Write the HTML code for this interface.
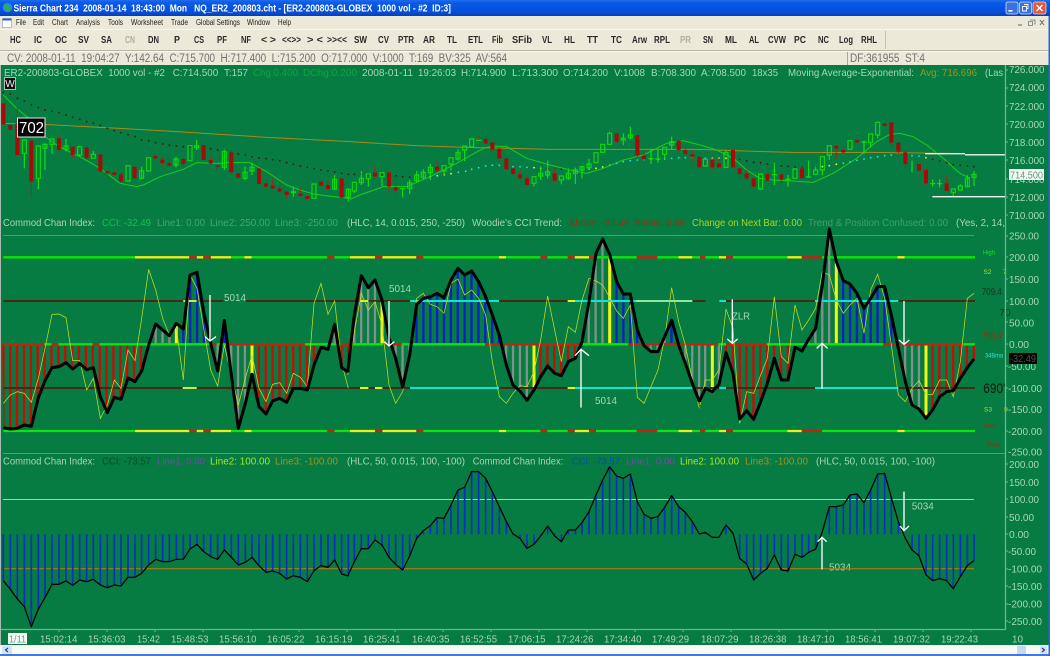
<!DOCTYPE html>
<html><head><meta charset="utf-8"><title>Sierra Chart</title>
<style>
html,body{margin:0;padding:0;background:#067b42;overflow:hidden}
svg{display:block;filter:blur(.3px)}
text{font-family:"Liberation Sans",sans-serif;white-space:pre}
.tb text{font-size:10px;font-weight:bold;fill:#2a2a2a}
.mn text{font-size:8.5px;fill:#222}
.lg text{font-size:10.5px;fill:#a8d6ba}
.ax text{font-size:10.5px;fill:#a8d6ba}
.tm text{font-size:10.5px;fill:#a8d6ba}
.an text{font-size:10.5px;fill:#a8d6ba}
.rl text{font-size:6.5px}
.n{fill:none}
.rw{fill:none;stroke:#a02a12;stroke-width:3}
.rb{fill:none;stroke:#a80a0a;stroke-width:12}
.gw{fill:none;stroke:#12e012;stroke-width:3.5}
.gb{fill:none;stroke:#10d810;stroke-width:3.5}
.dd{fill:none;stroke:#4a140c;stroke-width:5.5;stroke-linecap:round}
.dy{fill:none;stroke:#f4f430;stroke-width:5.5;stroke-linecap:round}
.dc{fill:none;stroke:#18e8d4;stroke-width:5.5;stroke-linecap:round}
.ma{fill:none;stroke:#18d018;stroke-width:3}
.ob{fill:none;stroke:#a88a20;stroke-width:3}
.k{fill:none;stroke:#000;stroke-width:9;stroke-linejoin:round}
.y{fill:none;stroke:#c4de28;stroke-width:2.2}
.h{fill:none;stroke-width:800;stroke-dasharray:7 13.64}
.hr{stroke:#c80c08}.hg{stroke:#80908a}.hb{stroke:#0a22c8}
.hy{fill:none;stroke:#f4f410;stroke-width:9}
.g{fill:none;stroke:#0ae60a;stroke-width:7}
.yl{fill:none;stroke:#eeee14;stroke-width:7}
.r{fill:none;stroke:#c8200e;stroke-width:7}
.b{fill:none;stroke:#4a2812;stroke-width:6}
.c{fill:none;stroke:#10e2d6;stroke-width:6}
.w{fill:none;stroke:#fff;stroke-width:4}
.k2{fill:none;stroke:#000;stroke-width:3.8;stroke-linejoin:round}
.bl{fill:none;stroke:#0630c4;stroke-width:5}
</style></head>
<body>
<svg width="1050" height="656" viewBox="0 0 1050 656" xmlns="http://www.w3.org/2000/svg">
<defs>
<linearGradient id="tg" x1="0" y1="0" x2="0" y2="1"><stop offset="0" stop-color="#1f6cec"/><stop offset=".2" stop-color="#0a58e6"/><stop offset=".75" stop-color="#0450dc"/><stop offset="1" stop-color="#0a3cb4"/></linearGradient>
<clipPath id="c6"><polygon points="6,388 10,638 31,642 52,640 73,630 94,634 115,548 135,497 156,458 177,455 198,443 218,462 239,445 260,464 280,458 301,545 322,593 343,547 363,553 384,489 405,500 425,468 446,390 467,327 488,345 508,362 529,325 550,342 570,180 591,172 611,290 632,385 653,468 673,316 694,480 715,640 736,565 756,478 777,575 798,597 818,558 839,550 860,562 880,520 901,520 922,525 942,450 963,397 984,403 1004,328 1025,458 1045,472 1050,472 1050,388"/></clipPath>
<clipPath id="c7"><polygon points="-7,388 -7,472 13,300 34,182 55,218 75,195 96,255 117,370 137,430 158,516 179,420 200,268 220,250 241,245 261,235 282,248 303,195 324,160 344,180 365,168 386,200 407,245 427,300 448,360 469,450 489,510 510,528 531,556 552,525 572,485 593,453 614,475 634,482 655,440 676,430 696,380 717,260 738,115 758,72 779,118 800,200 820,237 841,237 862,345 882,392 903,410 924,410 944,365 965,315 986,390 1006,445 1027,505 1048,560 1052,560 1052,388"/></clipPath>
<clipPath id="c8"><polygon points="-2,388 -2,560 16,520 37,530 57,508 78,413 99,475 119,612 140,587 161,613 182,560 202,505 223,430 244,495 264,495 285,397 306,408 326,373 347,340 367,210 388,42 409,140 430,197 450,207 471,235 492,280 512,250 533,215 554,215 574,300 595,400 616,500 636,570 657,582 678,610 698,585 719,545 740,530 760,527 781,490 802,458 822,432 826,432 826,388"/></clipPath>
<clipPath id="axc"><rect x="1006" y="65" width="44" height="565"/></clipPath>
<g id="l6"><path class="g" d="M10 127H405M693 127H733M755 127H982M1003 127H1050"/><path class="yl" d="M405 127H568M590 127H610M632 127H693M733 127H755"/><path class="r" d="M568 127H590M610 127H632M982 127H1003"/></g>
<g id="l7"><path class="yl" d="M0 127H75M97 127H199M447 127H468M674 127H717M985 127H1027"/><path class="r" d="M75 127H97M199 127H220M571 127H592M653 127H674M717 127H738M860 127H922"/><path class="g" d="M220 127H447M468 127H571M592 127H653M738 127H860M922 127H985M1027 127H1050"/></g>
<g id="l8"><path class="r" d="M0 127H16M78 127H99M305 127H366"/><path class="g" d="M16 127H57M99 127H262M366 127H592M614 127H825"/><path class="yl" d="M57 127H78M262 127H305M592 127H614"/></g>
</defs>

<rect width="1050" height="656" fill="#067b42"/>

<!-- window chrome -->
<rect width="1050" height="16" fill="url(#tg)"/>
<circle cx="7.5" cy="7.5" r="4.8" fill="#2a8ae0"/><path d="M3 5Q6 3 8 6T12 8L9 12Q6 11 5 8Z" fill="#30b040"/>
<text x="13.5" y="11.3" font-size="10" font-weight="bold" fill="#fff" textLength="437.5" lengthAdjust="spacingAndGlyphs">Sierra Chart 234  2008-01-14  18:43:00  Mon   NQ_ER2_200803.cht - [ER2-200803-GLOBEX  1000 vol - #2  ID:3]</text>
<rect x="1006" y="2" width="12" height="12" rx="2" fill="#3c70dc" stroke="#cfe0f8" stroke-width=".8"/><rect x="1008.5" y="10" width="4" height="1.6" fill="#fff"/>
<rect x="1019.5" y="2" width="12" height="12" rx="2" fill="#3c70dc" stroke="#cfe0f8" stroke-width=".8"/><path d="M1024 4.500h4v4h-1M1022.500 6.500h4v4.500h-4z" fill="none" stroke="#fff" stroke-width=".9"/>
<rect x="1033" y="2" width="13" height="12" rx="2" fill="#e2583a" stroke="#f4d8d0" stroke-width=".8"/><path d="M1036.500 5l6 6M1042.500 5l-6 6" stroke="#fff" stroke-width="1.5"/>

<rect y="16" width="1050" height="49" fill="#ece9d8"/>
<rect x="2.500" y="18.500" width="9" height="9" fill="#fff" stroke="#8a9ab8" stroke-width=".6"/><rect x="2.500" y="18.500" width="9" height="2" fill="#2a5ed0"/>
<g class="mn">
<text x="16" y="25" textLength="10" lengthAdjust="spacingAndGlyphs">File</text>
<text x="33" y="25" textLength="11" lengthAdjust="spacingAndGlyphs">Edit</text>
<text x="52" y="25" textLength="16" lengthAdjust="spacingAndGlyphs">Chart</text>
<text x="76" y="25" textLength="24" lengthAdjust="spacingAndGlyphs">Analysis</text>
<text x="108" y="25" textLength="15" lengthAdjust="spacingAndGlyphs">Tools</text>
<text x="131" y="25" textLength="32" lengthAdjust="spacingAndGlyphs">Worksheet</text>
<text x="171" y="25" textLength="17" lengthAdjust="spacingAndGlyphs">Trade</text>
<text x="196" y="25" textLength="44" lengthAdjust="spacingAndGlyphs">Global Settings</text>
<text x="247" y="25" textLength="23" lengthAdjust="spacingAndGlyphs">Window</text>
<text x="278" y="25" textLength="13" lengthAdjust="spacingAndGlyphs">Help</text>
</g>
<path d="M1018 25h4" stroke="#666" stroke-width="1"/><path d="M1030 20h5v4h-1M1028.500 21.500h4v4h-4z" fill="none" stroke="#777" stroke-width=".8"/><path d="M1040 20l4 5M1044 20l-4 5" stroke="#666" stroke-width="1"/>
<path d="M0 29.500H1050" stroke="#f8f6ec" stroke-width="1"/>
<g class="tb">
<text x="10" y="43" textLength="11" lengthAdjust="spacingAndGlyphs">HC</text>
<text x="34" y="43" textLength="8" lengthAdjust="spacingAndGlyphs">IC</text>
<text x="55" y="43" textLength="12" lengthAdjust="spacingAndGlyphs">OC</text>
<text x="78" y="43" textLength="11" lengthAdjust="spacingAndGlyphs">SV</text>
<text x="101" y="43" textLength="11" lengthAdjust="spacingAndGlyphs">SA</text>
<text x="125" y="43" textLength="10" lengthAdjust="spacingAndGlyphs" style="fill:#b0ae9e">CN</text>
<text x="148" y="43" textLength="11" lengthAdjust="spacingAndGlyphs">DN</text>
<text x="174" y="43" textLength="6" lengthAdjust="spacingAndGlyphs">P</text>
<text x="194" y="43" textLength="10" lengthAdjust="spacingAndGlyphs">CS</text>
<text x="217" y="43" textLength="10" lengthAdjust="spacingAndGlyphs">PF</text>
<text x="241" y="43" textLength="10" lengthAdjust="spacingAndGlyphs">NF</text>
<text x="261" y="43" textLength="15" lengthAdjust="spacingAndGlyphs">&lt; &gt;</text>
<text x="282" y="43" textLength="19" lengthAdjust="spacingAndGlyphs">&lt;&lt;&gt;&gt;</text>
<text x="307" y="43" textLength="16" lengthAdjust="spacingAndGlyphs">&gt; &lt;</text>
<text x="327" y="43" textLength="20" lengthAdjust="spacingAndGlyphs">&gt;&gt;&lt;&lt;</text>
<text x="354" y="43" textLength="13" lengthAdjust="spacingAndGlyphs">SW</text>
<text x="378" y="43" textLength="11" lengthAdjust="spacingAndGlyphs">CV</text>
<text x="398" y="43" textLength="16" lengthAdjust="spacingAndGlyphs">PTR</text>
<text x="423" y="43" textLength="12" lengthAdjust="spacingAndGlyphs">AR</text>
<text x="447" y="43" textLength="10" lengthAdjust="spacingAndGlyphs">TL</text>
<text x="468" y="43" textLength="15" lengthAdjust="spacingAndGlyphs">ETL</text>
<text x="492" y="43" textLength="11" lengthAdjust="spacingAndGlyphs">Fib</text>
<text x="512" y="43" textLength="20" lengthAdjust="spacingAndGlyphs">SFib</text>
<text x="542" y="43" textLength="10" lengthAdjust="spacingAndGlyphs">VL</text>
<text x="564" y="43" textLength="11" lengthAdjust="spacingAndGlyphs">HL</text>
<text x="587" y="43" textLength="11" lengthAdjust="spacingAndGlyphs">TT</text>
<text x="611" y="43" textLength="11" lengthAdjust="spacingAndGlyphs">TC</text>
<text x="632" y="43" textLength="15" lengthAdjust="spacingAndGlyphs">Arw</text>
<text x="654" y="43" textLength="16" lengthAdjust="spacingAndGlyphs">RPL</text>
<text x="680" y="43" textLength="11" lengthAdjust="spacingAndGlyphs" style="fill:#b0ae9e">PR</text>
<text x="703" y="43" textLength="10" lengthAdjust="spacingAndGlyphs">SN</text>
<text x="725" y="43" textLength="12" lengthAdjust="spacingAndGlyphs">ML</text>
<text x="749" y="43" textLength="10" lengthAdjust="spacingAndGlyphs">AL</text>
<text x="768" y="43" textLength="18" lengthAdjust="spacingAndGlyphs">CVW</text>
<text x="794" y="43" textLength="12" lengthAdjust="spacingAndGlyphs">PC</text>
<text x="818" y="43" textLength="11" lengthAdjust="spacingAndGlyphs">NC</text>
<text x="839" y="43" textLength="14" lengthAdjust="spacingAndGlyphs">Log</text>
<text x="861" y="43" textLength="16" lengthAdjust="spacingAndGlyphs">RHL</text>
</g>
<path d="M885.500 31V49" stroke="#c4c1b0" stroke-width="1"/>
<path d="M0 50.500H1050" stroke="#b8b5a4" stroke-width="1"/>
<rect y="51" width="1050" height="1" fill="#faf8f0"/>
<text x="7" y="62" font-size="11.500" fill="#707070" textLength="500" lengthAdjust="spacingAndGlyphs">CV: 2008-01-11  19:04:27  Y:142.64  C:715.700  H:717.400  L:715.200  O:717.000  V:1000  T:169  BV:325  AV:564</text>
<path d="M847.500 52V65" stroke="#aaa898" stroke-width="1"/>
<text x="850" y="62" font-size="11.500" fill="#707070" textLength="75" lengthAdjust="spacingAndGlyphs">DF:361955  ST:4</text>

<!-- TOP PANE -->
<g transform="translate(0 90) scale(.33333)">
<path class="ob" d="M10 100L130 103 300 112 500 123 800 142 1050 155"/>
<path class="ma" d="M10 15L30 35 50 55 80 80 135 140 177 170 240 200 300 235 360 280 410 290 430 285 480 260 550 238 590 218 650 220 690 218 750 218 800 245 860 285 900 300 940 312 1000 320 1050 325"/>
<path class="dd" d="M10 7h0M31 12h0M52 25h0M73 33h0M94 45h0M115 53h0M135 60h0M156 64h0M177 68h0M198 75h0M218 82h0M239 88h0M260 95h0M280 100h0M301 106h0M322 115h0M343 122h0M363 128h0M384 134h0M405 140h0M425 150h0M446 152h0M467 158h0M488 162h0M508 165h0M529 168h0M550 170h0M570 170h0M591 170h0M611 173h0M632 176h0M653 180h0M673 183h0M694 187h0M715 192h0M736 195h0M756 200h0M777 204h0M798 206h0M818 209h0M839 212h0M860 218h0M880 223h0M901 228h0M922 232h0M942 236h0M963 240h0M984 243h0M1004 246h0M1025 250h0M1045 253h0"/>
<path class="rw" d="M52 50V195M94 152V322M177 133V185M218 195V205M322 243V265M466 188V210M487 200V225M508 205V228M550 207V233M632 200V222M652 226V243M694 180V250M797 270V298M818 265V298M839 275V310M860 305V325M901 295V320M984 270V300M1025 265V325"/>
<path class="rb" d="M10 40V103M31 105V120M52 100V195M94 152V275M177 145V180M218 170V195M260 172V205M301 193V245M322 243V250M343 247V255M363 253V275M404 230V265M466 198V205M487 209V219M508 219V227M550 207V222M611 165V210M632 210V220M652 226V230M694 188V247M715 250V263M777 235V282M798 280V290M818 287V295M839 295V305M860 305V315M901 310V318M922 318V327M963 275V287M984 285V297M1025 265V323"/>
<path class="gw" d="M73 190V235M115 265V298M135 160V240M156 163V192M198 147V185M239 195V200M280 183V193M425 230V268M528 200V232M590 150V180M673 178V240M735 230V270M756 218V255M880 290V320M1004 255V300M1045 295V335"/>
<path class="gb" d="M67 150h12v40h-12zM109 168h12v97h-12zM129 163h12v12h-12zM150 147h12v16h-12zM192 168h12v10h-12zM233 170h12v25h-12zM274 193h12v12h-12zM378 227h12v46h-12zM419 242h12v23h-12zM440 203h12v40h-12zM522 207h12v18h-12zM564 167h12v45h-12zM584 167h12v5h-12zM667 185h12v47h-12zM729 247h12v18h-12zM750 232h12v11h-12zM874 305h12v3h-12zM936 282h12v43h-12zM998 268h12v29h-12zM1039 298h12v24h-12z"/>
</g>
<g transform="translate(350 90) scale(.33333)">
<path class="ob" d="M0 155L200 167 350 172 600 178 1050 178"/>
<path class="ma" d="M0 328L30 315 100 290 170 290 240 260 320 220 400 175 430 168 470 170 530 205 600 225 660 240 710 250 760 235 820 210 880 195 950 160 1000 152 1050 165"/>
<path class="dd" d="M13 253h0M34 253h0M55 253h0M75 255h0M96 255h0M117 256h0M137 257h0M158 260h0M179 261h0M200 262h0M220 262h0M593 235h0M614 237h0M634 238h0M655 238h0M676 238h0"/>
<path class="dy" d="M241 260h0M262 257h0M283 254h0M303 251h0M552 233h0M572 235h0M717 237h0M738 235h0M758 231h0"/>
<path class="dc" d="M325 247h0M347 244h0M365 238h0M386 233h0M407 228h0M427 226h0M448 226h0M469 228h0M489 230h0M510 230h0M531 232h0M779 225h0M800 220h0M820 215h0M841 212h0M862 210h0M882 210h0M903 208h0M924 208h0M944 207h0M965 205h0M986 203h0M1006 203h0M1027 203h0M1048 205h0"/>
<path class="rw" d="M75 228V265M117 290V312M137 278V312M261 212V245M386 140V150M407 135V160M427 178V185M448 205V213M489 252V258M510 240V270M531 255V290M614 232V278M800 155V160M862 195V202M882 180V212M986 180V185M1006 165V195M1027 180V215"/>
<path class="rb" d="M75 248V260M117 247V290M137 292V302M261 230V242M407 147V160M427 157V178M448 175V205M469 205V238M489 235V252M510 253V265M531 265V285M614 250V272M800 130V155M862 135V195M882 197V207M986 152V180M1006 180V192M1027 193V200M1048 200V232"/>
<path class="gw" d="M13 303V310M34 243V285M55 266V290M96 260V288M158 295V323M150 296H166M179 270V312M200 243V278M220 238V270M241 222V270M282 243V258M303 222V242M324 178V212M344 180V213M386 150V152M378 151H394M552 280V290M572 230V270M593 212V265M634 270V283M655 235V270M676 233V282M696 228V265M717 207V240M779 125V130M820 130V165M841 110V148M903 178V222M895 206H911M924 178V218M916 207H932M944 193V205M965 140V180"/>
<path class="gb" d="M7 277h12v26h-12zM28 265h12v13h-12zM49 252h12v14h-12zM90 248h12v12h-12zM173 278h12v17h-12zM194 255h12v17h-12zM214 247h12v15h-12zM235 232h12v16h-12zM276 227h12v16h-12zM297 203h12v19h-12zM318 188h12v19h-12zM338 168h12v12h-12zM359 147h12v23h-12zM546 260h12v20h-12zM566 250h12v8h-12zM587 245h12v10h-12zM628 258h12v12h-12zM649 250h12v15h-12zM670 240h12v10h-12zM690 230h12v10h-12zM711 222h12v11h-12zM732 188h12v30h-12zM752 163h12v24h-12zM773 130h12v33h-12zM814 145h12v5h-12zM835 135h12v8h-12zM938 172h12v21h-12zM959 155h12v10h-12z"/>
</g>
<g transform="translate(700 90) scale(.33333)">
<path class="ob" d="M0 178L100 182 300 188 500 187 750 190"/>
<path class="ma" d="M0 165L50 180 100 205 140 240 180 265 220 270 280 273 340 277 400 250 470 205 530 155 570 133 600 130 640 140 680 165 730 205 780 250 810 265"/>
<path class="dd" d="M119 208h0M140 213h0M161 217h0M182 218h0M202 222h0M223 225h0M244 228h0M264 229h0M285 231h0M306 232h0M326 233h0M347 233h0M698 208h0M719 213h0M740 218h0M760 224h0M781 226h0M802 228h0M822 230h0"/>
<path class="dy" d="M37 205h0M57 205h0M78 205h0M99 207h0M367 230h0M388 227h0M409 223h0M678 203h0"/>
<path class="dc" d="M16 205h0M430 220h0M450 216h0M471 211h0M492 207h0M512 203h0M533 200h0M554 197h0M574 195h0M595 192h0M616 195h0M636 197h0M657 198h0"/>
<path class="rw" d="M37 205V240M57 205V232M99 175V232M119 252V265M140 240V270M202 250V275M244 268V282M306 230V265M409 175V205M430 165V190M574 158V170M595 185V198M616 175V235M678 232V285M740 258V305"/>
<path class="rb" d="M37 210V232M57 220V232M99 180V232M119 235V252M140 250V265M161 265V290M202 252V272M244 253V268M306 235V265M409 167V175M430 180V187M471 150V158M554 100V108M574 97V158M595 158V185M616 187V222M657 222V242M678 240V280M740 280V303"/>
<path class="gw" d="M78 182V188M182 297V300M223 218V285M215 254H231M264 255V290M256 268H272M326 212V263M318 261H334M347 230V240M367 240V255M388 195V210M492 152V192M484 156H500M512 157V170M533 135V145M636 212V247M698 268V290M690 281H706M719 268V292M711 281H727M760 307V322M781 283V288M802 255V293M822 243V288"/>
<path class="gb" d="M10 208h12v20h-12zM72 188h12v44h-12zM176 252h12v45h-12zM279 237h12v28h-12zM341 240h12v13h-12zM361 200h12v40h-12zM382 167h12v28h-12zM444 152h12v26h-12zM506 132h12v25h-12zM527 97h12v38h-12zM754 297h12v10h-12zM775 288h12v12h-12zM796 265h12v25h-12zM816 253h12v9h-12z"/>
<path d="M675 191H795" stroke="#f4f4f4" stroke-width="4" fill="none"/><path d="M795 194.500H917" stroke="#f4f4f4" stroke-width="4" fill="none"/><path d="M697 320H917" stroke="#f4f4f4" stroke-width="4" fill="none"/>
</g>
<rect x="4.500" y="77.500" width="11" height="12" fill="#111" stroke="#b8b8b8" stroke-width="1"/>
<text x="5.300" y="87" font-size="10" fill="#f0f0f0" textLength="9.500" lengthAdjust="spacingAndGlyphs">W</text>
<rect x="17.500" y="118" width="27.500" height="19" fill="#000" stroke="#e8e8e8" stroke-width="1"/>
<text x="19" y="133" font-size="16" fill="#fff" textLength="25" lengthAdjust="spacingAndGlyphs">702</text>

<!-- top legend -->
<g class="lg">
<text x="4" y="76" textLength="161" lengthAdjust="spacingAndGlyphs">ER2-200803-GLOBEX  1000 vol - #2</text>
<text x="172.700" y="76" textLength="45.500" lengthAdjust="spacingAndGlyphs">C:714.500</text>
<text x="224" y="76" textLength="24" lengthAdjust="spacingAndGlyphs">T:157</text>
<text x="253" y="76" textLength="45" lengthAdjust="spacingAndGlyphs" style="fill:#0aa83c">Chg:0.400</text>
<text x="303" y="76" textLength="54" lengthAdjust="spacingAndGlyphs" style="fill:#0aa83c">DChg:0.200</text>
<text x="362" y="76" textLength="51" lengthAdjust="spacingAndGlyphs">2008-01-11</text>
<text x="418" y="76" textLength="38" lengthAdjust="spacingAndGlyphs">19:26:03</text>
<text x="461" y="76" textLength="45" lengthAdjust="spacingAndGlyphs">H:714.900</text>
<text x="512" y="76" textLength="46" lengthAdjust="spacingAndGlyphs">L:713.300</text>
<text x="563" y="76" textLength="45" lengthAdjust="spacingAndGlyphs">O:714.200</text>
<text x="614" y="76" textLength="31" lengthAdjust="spacingAndGlyphs">V:1008</text>
<text x="651" y="76" textLength="45" lengthAdjust="spacingAndGlyphs">B:708.300</text>
<text x="701" y="76" textLength="45" lengthAdjust="spacingAndGlyphs">A:708.500</text>
<text x="752" y="76" textLength="26" lengthAdjust="spacingAndGlyphs">18x35</text>
<text x="788" y="76" textLength="126" lengthAdjust="spacingAndGlyphs">Moving Average-Exponential:</text>
<text x="920" y="76" textLength="57" lengthAdjust="spacingAndGlyphs" style="fill:#a8901e">Avg: 716.696</text>
<text x="985" y="76" textLength="18" lengthAdjust="spacingAndGlyphs">(Las</text>
</g>

<!-- MIDDLE PANE -->
<g class="lg">
<text x="3" y="226" textLength="92" lengthAdjust="spacingAndGlyphs">Commod Chan Index:</text>
<text x="102" y="226" textLength="49" lengthAdjust="spacingAndGlyphs" style="fill:#10c448">CCI: -32.49</text>
<text x="157" y="226" textLength="48" lengthAdjust="spacingAndGlyphs" style="fill:#46a86c">Line1: 0.00</text>
<text x="210" y="226" textLength="60" lengthAdjust="spacingAndGlyphs" style="fill:#46a86c">Line2: 250.00</text>
<text x="275" y="226" textLength="63" lengthAdjust="spacingAndGlyphs" style="fill:#46a86c">Line3: -250.00</text>
<text x="347" y="226" textLength="118" lengthAdjust="spacingAndGlyphs">(HLC, 14, 0.015, 250, -250)</text>
<text x="472" y="226" textLength="90" lengthAdjust="spacingAndGlyphs">Woodie's CCI Trend:</text>
<text x="569" y="226" textLength="60" lengthAdjust="spacingAndGlyphs" style="fill:#8e3414">Above: -32.49</text>
<text x="634" y="226" textLength="51" lengthAdjust="spacingAndGlyphs" style="fill:#8e3414">Below: 0.00</text>
<text x="692" y="226" textLength="110" lengthAdjust="spacingAndGlyphs" style="fill:#a8d824">Change on Next Bar: 0.00</text>
<text x="808" y="226" textLength="140" lengthAdjust="spacingAndGlyphs" style="fill:#42a068">Trend &amp; Position Confused: 0.00</text>
<text x="956" y="226" textLength="49" lengthAdjust="spacingAndGlyphs">(Yes, 2, 14,</text>
</g>
<path d="M3 235.500H974" stroke="#4a9e72" stroke-width="1" fill="none"/>

<g transform="translate(0 215) scale(.33333)">
<g clip-path="url(#c6)">
<path class="h hr" d="M6.500 350H429M773 350H967M1021 350H1050"/>
<path class="h hg" d="M463.500 350H512M649.500 350H657M690 350H740M980 350H1008"/>
<path class="h hb" d="M546.500 350H615M669.500 350H677"/>
<path class="hy" d="M529 0V700M756 0V700"/>
</g>
<path class="b" d="M10 258H550M590 258H670M738 258H1050M10 519H548M590 519H1050"/><path fill="none" stroke="#c8e850" stroke-width="6" d="M550 258H590M548 519H590"/>
<use href="#l6"/><use href="#l6" y="521"/>
<path class="g" d="M133 388H155M175 388H278M298 388H635M650 388H683M915 388H1022"/>
<path class="r" d="M8 388H133M155 388H175M278 388H298M635 388H650M683 388H915M1022 388H1050"/>
<path class="y" d="M10 565L31 540 52 530 73 535 94 562 115 490 135 400 156 298 177 297 198 308 218 437 239 437 260 525 280 490 301 610 322 570 343 495 363 520 384 405 405 437 425 310 446 163 467 225 488 310 508 360 529 338 550 495 570 180 591 220 611 340 632 465 653 513 673 390 694 480 715 570 736 490 756 420 777 520 798 560 818 508 839 503 860 535 880 475 901 487 922 515 942 265 963 205 984 298 1004 258 1025 445 1045 520"/>
<path class="k" d="M10 638L31 642 52 640 73 630 94 634 115 548 135 497 156 458 177 455 198 443 218 462 239 445 260 464 280 458 301 545 322 593 343 547 363 553 384 489 405 500 425 468 446 390 467 327 488 345 508 362 529 325 550 342 570 180 591 172 611 290 632 385 653 468 673 316 694 480 715 640 736 565 756 478 777 575 798 597 818 558 839 550 860 562 880 520 901 520 922 525 942 450 963 397 984 403 1004 328 1025 458 1045 472"/>
<path class="w" d="M630 240V378M615 365L630 378 648 365"/>
</g>
<g transform="translate(350 215) scale(.33333)">
<g clip-path="url(#c7)">
<path class="h hg" d="M9.500 350H79M133.500 350H183M465 350H535M692 350H762M878 350H948M982 350H1052"/>
<path class="h hb" d="M196 350H452M796 350H866M961 350H969"/>
<path class="h hr" d="M568 350H680"/>
<path class="hy" d="M96 0V700M552 0V700M779 0V700"/>
</g>
<path class="b" d="M0 258H30M55 258H180M447 258H653M1027 258H1050M0 519H30M55 519H75M97 519H180M447 519H653M1027 519H1050"/>
<path class="yl" d="M30 258H55M653 258H675M30 519H55M75 519H97M653 519H675" style="stroke-width:6"/>
<path class="c" d="M180 258H447M675 258H858M180 519H447M675 519H1027"/><path fill="none" stroke="#90e8a0" stroke-width="6" d="M858 258H1027"/>
<use href="#l7"/><use href="#l7" y="521"/>
<path class="g" d="M0 388H100M155 388H405M695 388H835"/>
<path class="r" d="M100 388H155M405 388H695M835 388H1050"/>
<path class="y" d="M-7 480L13 350 34 235 55 285 75 260 96 330 117 510 137 565 158 530 179 425 200 250 220 235 241 268 261 275 282 295 303 205 324 192 344 240 365 225 386 250 407 300 427 440 448 545 469 565 489 535 510 512 531 515 552 470 572 375 593 243 614 345 634 440 655 335 676 352 696 255 717 190 738 198 758 210 779 248 800 288 820 310 841 270 862 547 882 565 903 515 924 465 944 370 965 218 986 320 1006 390 1027 495 1048 580"/>
<path class="k" d="M-7 472L13 300 34 182 55 218 75 195 96 255 117 370 137 430 158 516 179 420 200 268 220 250 241 245 261 235 282 248 303 195 324 160 344 180 365 168 386 200 407 245 427 300 448 360 469 450 489 510 510 528 531 556 552 525 572 485 593 453 614 475 634 482 655 440 676 430 696 380 717 260 738 115 758 72 779 118 800 200 820 237 841 237 862 345 882 392 903 410 924 410 944 365 965 315 986 390 1006 445 1027 505 1048 560"/>
<path class="w" d="M117 258V392M103 380L117 393 133 380M693 578V402M675 422L693 403 717 422"/>
</g>
<g transform="translate(700 215) scale(.33333)">
<g clip-path="url(#c8)">
<path class="h hg" d="M12 350H20M53 350H61M322 350H392M612 350H661"/>
<path class="h hr" d="M74 350H82M95 350H268M694 350H826"/>
<path class="h hb" d="M426 350H578"/>
<path class="hy" d="M37 0V700M409 0V700M678 0V700"/>
</g>
<path class="b" d="M0 258H16M78 258H345M595 258H825M0 519H58M78 519H345M595 519H825"/>
<path class="c" d="M58 258H78M345 258H595M58 519H78M345 519H595"/>
<use href="#l8"/><use href="#l8" y="521"/>
<path class="r" d="M0 388H55M78 388H200M550 388H790"/>
<path class="g" d="M55 388H78M200 388H550M790 388H825"/>
<path class="y" d="M0 570L16 495 37 495 57 465 78 282 99 340 119 625 140 530 161 535 182 480 202 430 223 245 244 425 264 445 285 270 306 345 326 315 347 280 367 170 388 180 409 255 430 295 450 270 471 250 492 355 512 225 533 178 554 250 574 390 595 540 616 560 636 520 657 497 678 538 698 538 719 495 740 495 760 545 781 440 802 250 822 235"/>
<path class="k" d="M-2 560L16 520 37 530 57 508 78 413 99 475 119 612 140 587 161 613 182 560 202 505 223 430 244 495 264 495 285 397 306 408 326 373 347 340 367 210 388 42 409 140 430 197 450 207 471 235 492 280 512 250 533 215 554 215 574 300 595 400 616 500 636 570 657 582 678 610 698 585 719 545 740 530 760 527 781 490 802 458 822 432"/>
<path class="w" d="M97 253V385M82 372L97 385 113 372M366 522V385M350 400L366 385 383 400M612 258V388M597 375L612 388 628 375"/>
</g>
<g class="an">
<text x="224" y="301" textLength="22" lengthAdjust="spacingAndGlyphs">5014</text>
<text x="389" y="292" textLength="22" lengthAdjust="spacingAndGlyphs">5014</text>
<text x="595" y="404" textLength="22" lengthAdjust="spacingAndGlyphs">5014</text>
<text x="732" y="319.500" textLength="18" lengthAdjust="spacingAndGlyphs">ZLR</text>
<text x="911.700" y="509.500" textLength="22" lengthAdjust="spacingAndGlyphs">5034</text>
<text x="829" y="570.500" textLength="22" lengthAdjust="spacingAndGlyphs">5034</text>
</g>
<g class="rl">
<text x="983" y="254.500" fill="#18e030" textLength="12" lengthAdjust="spacingAndGlyphs">High</text>
<text x="983.500" y="274" fill="#b8e020">S2</text>
<text x="1003" y="274" fill="#b8e020">7</text>
<text x="985" y="357.500" fill="#30e8d0" textLength="18" lengthAdjust="spacingAndGlyphs">34Bma</text>
<text x="984" y="411.500" fill="#b8e020">S3</text>
<text x="1004" y="411.500" fill="#b8e020">5</text>
<text x="983" y="428" fill="#9a3014" textLength="12" lengthAdjust="spacingAndGlyphs">Min</text>
<text x="987" y="447" fill="#9a3014" textLength="13" lengthAdjust="spacingAndGlyphs">Pivt</text>
</g>
<text x="981.700" y="295" font-size="10.500" fill="#0d3a22" textLength="20" lengthAdjust="spacingAndGlyphs">709.4</text>
<text x="999" y="316" font-size="10.500" fill="#0d3a22">70</text>
<text x="981.700" y="339" font-size="10.500" fill="#8e3414" textLength="20" lengthAdjust="spacingAndGlyphs">700.4</text>
<text x="983.300" y="393" font-size="14" fill="#06180e" textLength="22" lengthAdjust="spacingAndGlyphs">690'</text>

<!-- BOTTOM PANE -->
<path d="M3 453.500H1005" stroke="#4aa274" stroke-width="1" fill="none"/>
<g class="lg">
<text x="3" y="464.500" textLength="92" lengthAdjust="spacingAndGlyphs">Commod Chan Index:</text>
<text x="102" y="464.500" textLength="49" lengthAdjust="spacingAndGlyphs" style="fill:#064c2a">CCI: -73.57</text>
<text x="157" y="464.500" textLength="48" lengthAdjust="spacingAndGlyphs" style="fill:#6e4ca4">Line1: 0.00</text>
<text x="210" y="464.500" textLength="60" lengthAdjust="spacingAndGlyphs" style="fill:#a8e828">Line2: 100.00</text>
<text x="275" y="464.500" textLength="63" lengthAdjust="spacingAndGlyphs" style="fill:#a8901e">Line3: -100.00</text>
<text x="347" y="464.500" textLength="118" lengthAdjust="spacingAndGlyphs">(HLC, 50, 0.015, 100, -100)</text>
<text x="472.700" y="464.500" textLength="90.500" lengthAdjust="spacingAndGlyphs">Commod Chan Index:</text>
<text x="572" y="464.500" textLength="48" lengthAdjust="spacingAndGlyphs" style="fill:#0a4cb4">CCI: -73.57</text>
<text x="626" y="464.500" textLength="49" lengthAdjust="spacingAndGlyphs" style="fill:#6e4ca4">Line1: 0.00</text>
<text x="680" y="464.500" textLength="59" lengthAdjust="spacingAndGlyphs" style="fill:#a8e828">Line2: 100.00</text>
<text x="745" y="464.500" textLength="63" lengthAdjust="spacingAndGlyphs" style="fill:#a8901e">Line3: -100.00</text>
<text x="816" y="464.500" textLength="119" lengthAdjust="spacingAndGlyphs">(HLC, 50, 0.015, 100, -100)</text>
</g>
<path d="M3 499.500H974" stroke="#b4ea10" stroke-width="1.100" fill="none"/>
<path d="M3 568.700H974" stroke="#a87c18" stroke-width="1.100" fill="none"/>
<g transform="translate(0 450) scale(.33333)">
<path class="bl" d="M10 253V392M31 253V418M52 253V447M73 253V470M94 253V530M115 253V477M135 253V443M156 253V403M177 253V403M198 253V393M218 253V406M239 253V390M260 253V395M280 253V388M301 253V405M322 253V413M343 253V405M363 253V408M384 253V382M405 253V382M425 253V370M446 253V345M467 253V328M488 253V335M508 253V335M529 253V328M550 253V328M570 253V297M591 253V283M611 253V305M632 253V320M653 253V328M673 253V300M694 253V322M715 253V345M736 253V337M756 253V322M777 253V347M798 253V367M818 253V363M839 253V370M860 253V387M880 253V377M901 253V382M922 253V395M942 253V362M963 253V347M984 253V352M1004 253V330M1025 253V372M1045 253V378"/>
<path class="k2" d="M10 392L31 418 52 447 73 470 94 530 115 477 135 443 156 403 177 403 198 393 218 406 239 390 260 395 280 388 301 405 322 413 343 405 363 408 384 382 405 382 425 370 446 345 467 328 488 335 508 335 529 328 550 328 570 297 591 283 611 305 632 320 653 328 673 300 694 322 715 345 736 337 756 322 777 347 798 367 818 363 839 370 860 387 880 377 901 382 922 395 942 362 963 347 984 352 1004 330 1025 372 1045 378"/>
</g>
<g transform="translate(350 450) scale(.33333)">
<path class="bl" d="M13 253V335M34 253V296M55 253V296M75 253V270M96 253V285M117 253V322M137 253V343M158 253V360M179 253V318M200 253V265M220 253V242M241 253V227M261 253V203M282 253V205M303 253V165M324 253V120M344 253V112M365 253V65M386 253V65M407 253V85M427 253V125M448 253V170M469 253V215M489 253V252M510 253V265M531 253V295M552 253V283M572 253V258M593 253V228M614 253V258M634 253V275M655 253V240M676 253V240M696 253V218M717 253V185M738 253V135M758 253V90M779 253V50M800 253V78M820 253V85M841 253V72M862 253V155M882 253V193M903 253V205M924 253V200M944 253V172M965 253V137M986 253V170M1006 253V187M1027 253V215"/>
<path class="k2" d="M-7 378L13 335 34 296 55 296 75 270 96 285 117 322 137 343 158 360 179 318 200 265 220 242 241 227 261 203 282 205 303 165 324 120 344 112 365 65 386 65 407 85 427 125 448 170 469 215 489 252 510 265 531 295 552 283 572 258 593 228 614 258 634 275 655 240 676 240 696 218 717 185 738 135 758 90 779 50 800 78 820 85 841 72 862 155 882 193 903 205 924 200 944 172 965 137 986 170 1006 187 1027 215 1048 252"/>
</g>
<g transform="translate(700 450) scale(.33333)">
<path class="bl" d="M16 253V247M78 253V225M119 253V325M140 253V342M161 253V390M182 253V370M202 253V355M223 253V315M244 253V360M264 253V363M285 253V313M306 253V322M326 253V307M347 253V297M388 253V170M409 253V170M430 253V165M450 253V135M471 253V132M492 253V158M512 253V120M533 253V72M554 253V70M574 253V143M595 253V215M636 253V300M657 253V317M678 253V375M698 253V392M719 253V386M740 253V392M760 253V416M781 253V380M802 253V347M822 253V332"/>
<path class="k2" d="M-2 252L16 247 37 262 57 262 78 225 99 250 119 325 140 342 161 390 182 370 202 355 223 315 244 360 264 363 285 313 306 322 326 307 347 297 367 245 388 170 409 170 430 165 450 135 471 132 492 158 512 120 533 72 554 70 574 143 595 215 616 265 636 300 657 317 678 375 698 392 719 386 740 392 760 416 781 380 802 347 822 332"/>
<path class="w" d="M612 125V240M600 228L612 242 627 228M366 358V262M353 275L366 262 380 275"/>
</g>

<!-- axes -->
<path d="M1005.500 65V630M0 629.500H1006" stroke="#6cb68e" stroke-width="1.300" fill="none"/>
<path d="M1005 70h3M1005 88h3M1005 106h3M1005 124h3M1005 142h3M1005 160h3M1005 179h3M1005 197h3M1005 215h3M1005 236h3M1005 257h3M1005 279h3M1005 301h3M1005 322h3M1005 344h3M1005 366h3M1005 388h3M1005 409h3M1005 431h3M1005 464h3M1005 482h3M1005 499h3M1005 517h3M1005 534h3M1005 551h3M1005 569h3M1005 586h3M1005 604h3M1005 621h3" stroke="#6cb68e" stroke-width="1" fill="none"/>
<g class="ax" clip-path="url(#axc)">
<text x="1009" y="73" textLength="35.500" lengthAdjust="spacingAndGlyphs">726.000</text>
<text x="1009" y="91" textLength="35.500" lengthAdjust="spacingAndGlyphs">724.000</text>
<text x="1009" y="110" textLength="35.500" lengthAdjust="spacingAndGlyphs">722.000</text>
<text x="1009" y="128" textLength="35.500" lengthAdjust="spacingAndGlyphs">720.000</text>
<text x="1009" y="146" textLength="35.500" lengthAdjust="spacingAndGlyphs">718.000</text>
<text x="1009" y="164" textLength="35.500" lengthAdjust="spacingAndGlyphs">716.000</text>
<text x="1009" y="183" textLength="35.500" lengthAdjust="spacingAndGlyphs">714.000</text>
<text x="1009" y="201" textLength="35.500" lengthAdjust="spacingAndGlyphs">712.000</text>
<text x="1009" y="219" textLength="35.500" lengthAdjust="spacingAndGlyphs">710.000</text>
<text x="1009" y="239.500" textLength="30" lengthAdjust="spacingAndGlyphs">250.00</text>
<text x="1009" y="261" textLength="30" lengthAdjust="spacingAndGlyphs">200.00</text>
<text x="1009" y="283" textLength="30" lengthAdjust="spacingAndGlyphs">150.00</text>
<text x="1009" y="305" textLength="30" lengthAdjust="spacingAndGlyphs">100.00</text>
<text x="1009" y="326.500" textLength="25" lengthAdjust="spacingAndGlyphs">50.00</text>
<text x="1009" y="348" textLength="20" lengthAdjust="spacingAndGlyphs">0.00</text>
<text x="1008" y="370" textLength="28" lengthAdjust="spacingAndGlyphs">-50.00</text>
<text x="1008" y="392" textLength="34" lengthAdjust="spacingAndGlyphs">-100.00</text>
<text x="1008" y="413" textLength="34" lengthAdjust="spacingAndGlyphs">-150.00</text>
<text x="1008" y="435" textLength="34" lengthAdjust="spacingAndGlyphs">-200.00</text>
<text x="1008" y="455.500" textLength="34" lengthAdjust="spacingAndGlyphs">-250.00</text>
<text x="1009" y="468" textLength="30" lengthAdjust="spacingAndGlyphs">200.00</text>
<text x="1009" y="486" textLength="30" lengthAdjust="spacingAndGlyphs">150.00</text>
<text x="1009" y="503" textLength="30" lengthAdjust="spacingAndGlyphs">100.00</text>
<text x="1009" y="521" textLength="25" lengthAdjust="spacingAndGlyphs">50.00</text>
<text x="1009" y="538" textLength="20" lengthAdjust="spacingAndGlyphs">0.00</text>
<text x="1008" y="555" textLength="28" lengthAdjust="spacingAndGlyphs">-50.00</text>
<text x="1008" y="572.500" textLength="34" lengthAdjust="spacingAndGlyphs">-100.00</text>
<text x="1008" y="590" textLength="34" lengthAdjust="spacingAndGlyphs">-150.00</text>
<text x="1008" y="607.500" textLength="34" lengthAdjust="spacingAndGlyphs">-200.00</text>
<text x="1008" y="625" textLength="34" lengthAdjust="spacingAndGlyphs">-250.00</text>
</g>
<rect x="1009" y="169" width="35" height="11" fill="#f6f8f6"/>
<text x="1010" y="178.500" font-size="10.500" fill="#5c9a78" textLength="33" lengthAdjust="spacingAndGlyphs">714.500</text>
<rect x="1009" y="353" width="28" height="11" fill="#000"/>
<text x="1010" y="362" font-size="10.500" fill="#4a5a50" textLength="26" lengthAdjust="spacingAndGlyphs">-32.49</text>

<!-- time axis -->
<path d="M59 630v2M107 630v2M155 630v2M203 630v2M251 630v2M299 630v2M347 630v2M395 630v2M443 630v2M491 630v2M539 630v2M587 630v2M635 630v2M683 630v2M731 630v2M779 630v2M827 630v2M875 630v2M923 630v2M971 630v2" stroke="#6cb68e" stroke-width="1" fill="none"/>
<rect x="8" y="633" width="19" height="11" fill="#f8faf8"/>
<text x="9" y="642.500" font-size="10.500" fill="#6a9a80" textLength="17" lengthAdjust="spacingAndGlyphs">1/11</text>
<g class="tm">
<text x="40" y="642.500" textLength="37.500" lengthAdjust="spacingAndGlyphs">15:02:14</text>
<text x="88" y="642.500" textLength="37.500" lengthAdjust="spacingAndGlyphs">15:36:03</text>
<text x="137" y="642.500" textLength="23" lengthAdjust="spacingAndGlyphs">15:42</text>
<text x="171" y="642.500" textLength="37.500" lengthAdjust="spacingAndGlyphs">15:48:53</text>
<text x="219" y="642.500" textLength="37.500" lengthAdjust="spacingAndGlyphs">15:56:10</text>
<text x="267" y="642.500" textLength="37.500" lengthAdjust="spacingAndGlyphs">16:05:22</text>
<text x="315" y="642.500" textLength="37.500" lengthAdjust="spacingAndGlyphs">16:15:19</text>
<text x="363" y="642.500" textLength="37.500" lengthAdjust="spacingAndGlyphs">16:25:41</text>
<text x="412" y="642.500" textLength="37.500" lengthAdjust="spacingAndGlyphs">16:40:35</text>
<text x="460" y="642.500" textLength="37" lengthAdjust="spacingAndGlyphs">16:52:55</text>
<text x="508" y="642.500" textLength="37.500" lengthAdjust="spacingAndGlyphs">17:06:15</text>
<text x="556" y="642.500" textLength="37.500" lengthAdjust="spacingAndGlyphs">17:24:26</text>
<text x="604" y="642.500" textLength="37.500" lengthAdjust="spacingAndGlyphs">17:34:40</text>
<text x="652" y="642.500" textLength="37" lengthAdjust="spacingAndGlyphs">17:49:29</text>
<text x="701" y="642.500" textLength="37.500" lengthAdjust="spacingAndGlyphs">18:07:29</text>
<text x="749" y="642.500" textLength="37.500" lengthAdjust="spacingAndGlyphs">18:26:38</text>
<text x="797" y="642.500" textLength="37.500" lengthAdjust="spacingAndGlyphs">18:47:10</text>
<text x="845" y="642.500" textLength="37" lengthAdjust="spacingAndGlyphs">18:56:41</text>
<text x="893" y="642.500" textLength="37" lengthAdjust="spacingAndGlyphs">19:07:32</text>
<text x="941" y="642.500" textLength="37" lengthAdjust="spacingAndGlyphs">19:22:43</text>
<text x="1012" y="642.500" textLength="11" lengthAdjust="spacingAndGlyphs">10</text>
</g>

<!-- frame + scroll bar -->
<rect x="0" y="65" width="1" height="580" fill="#a8bcb0"/>
<rect x="0" y="645" width="1050" height="9" fill="#f9f9f5"/>
<rect x="0" y="654" width="1050" height="2" fill="#3f78e0"/>
<rect x="2" y="646" width="10" height="8" fill="#d4e2f6"/><path d="M8 648l-2.500 2 2.500 2" fill="none" stroke="#26408a" stroke-width="1.200"/>
<rect x="1017" y="646" width="9" height="8" fill="#c8d8ee"/>
<rect x="1040" y="646" width="7" height="8" fill="#d4e2f6"/><path d="M1042 648l2.500 2-2.500 2" fill="none" stroke="#26408a" stroke-width="1.200"/>
<rect x="1048.500" y="16" width="1.500" height="640" fill="#2e62d4"/>
</svg>
</body></html>
